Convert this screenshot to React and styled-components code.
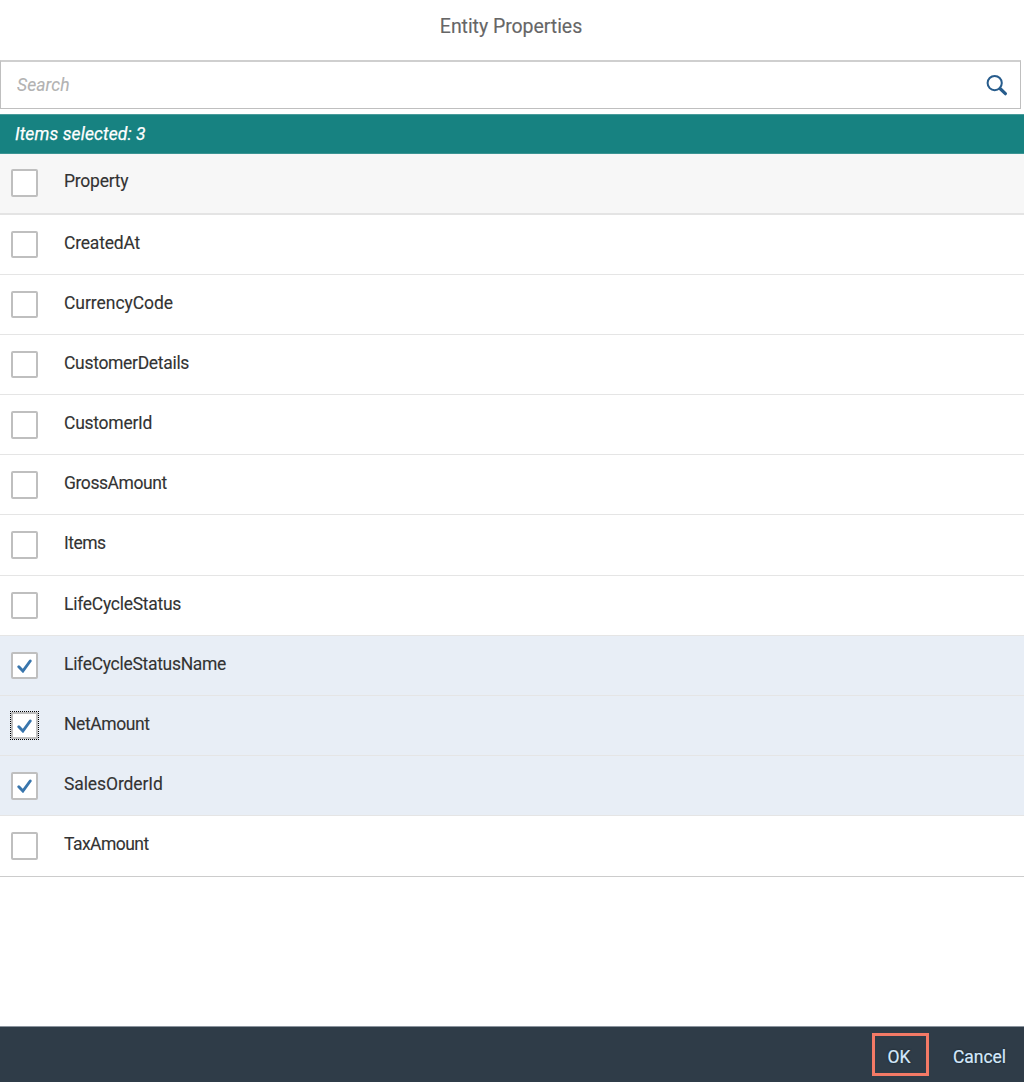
import React from "react";
import styled, { createGlobalStyle } from "styled-components";

const GlobalStyle = createGlobalStyle`
  *, *::before, *::after { box-sizing: border-box; }
  body { margin: 0; background: #fff; }
`;

const Dialog = styled.div`
  display: flex;
  flex-direction: column;
  width: 100%;
  height: 1082px;
  overflow: hidden;
  background: #fff;
  color: #333;
  font-family: Roboto, "Liberation Sans", sans-serif;
  font-size: 17.5px;
  -webkit-text-stroke: 0.12px currentColor;
`;

const Header = styled.header`
  display: flex;
  justify-content: center;
  flex: none;
  height: 60px;
  padding: 15px 2px 0 0;
`;

const Title = styled.h1`
  margin: 0;
  color: #666;
  font-size: 19.5px;
  font-weight: 400;
  line-height: 24px;
  letter-spacing: ${(p) => p.$tracking}px;
`;

const SearchField = styled.div`
  display: flex;
  align-items: center;
  justify-content: space-between;
  flex: none;
  height: 49px;
  margin-right: 3px;
  padding: 0 12px 0 15px;
  border: 1px solid #bfbfbf;
  border-top: 2px solid #cfcfcf;
`;

const SearchInput = styled.input`
  flex: 1;
  padding: 0 0 1px 1px;
  border: 0;
  outline: 0;
  background: transparent;
  font: italic 17.5px Roboto, "Liberation Sans", sans-serif;
  letter-spacing: 0.1px;

  &::placeholder {
    color: #b2b2b2;
    opacity: 1;
  }
`;

const SelectionBar = styled.div`
  flex: none;
  height: 40px;
  margin-top: 5px;
  padding-left: 15px;
  border-top: 1px solid #4a9c9b;
  border-bottom: 1px solid #3b9493;
  background: #178281;
  color: #fff;
  font-style: italic;
  line-height: 39px;
  letter-spacing: ${(p) => p.$tracking}px;
  -webkit-text-stroke: 0.25px currentColor;
`;

const List = styled.div`
  flex: 1;
`;

const Row = styled.label`
  display: flex;
  align-items: flex-start;
  height: 60.18px;
  padding: 16px 0 0 11px;
  border-bottom: 1px solid #e5e5e5;
  background: ${(p) => (p.$selected ? "#e8eef6" : "#fff")};

  &:last-child {
    border-bottom-color: #ccc;
    height: 60.4px;
  }
`;

const HeaderRow = styled(Row)`
  height: 60.6px;
  padding-top: 15px;
  border-bottom: 2px solid #e4e4e4;
  background: #f7f7f7;
`;

const Box = styled.span`
  display: flex;
  align-items: center;
  justify-content: center;
  flex: none;
  width: 27px;
  height: 27.5px;
  border: 2px solid #bfbfbf;
  border-radius: ${(p) => (p.$focused ? 0 : 2)}px;
  outline: ${(p) => (p.$focused ? "1px dotted #000" : "none")};
  background: #fff;
`;

const Label = styled.span`
  margin-left: 26px;
  line-height: 24px;
  letter-spacing: ${(p) => p.$tracking}px;
`;

const Footer = styled.footer`
  display: flex;
  align-items: flex-start;
  justify-content: flex-end;
  flex: none;
  height: 56px;
  padding: 6px 18px 0 0;
  border-top: 1px solid #8b949e;
  background: #2f3c48;
`;

const Button = styled.button`
  height: 43px;
  padding: 4px 0 0;
  border: 0;
  background: transparent;
  color: #d5e9fb;
  font: 400 17.5px Roboto, "Liberation Sans", sans-serif;
  -webkit-text-stroke: 0.2px currentColor;
  text-shadow: 0 0 2px #111a22;
  letter-spacing: ${(p) => p.$tracking}px;
`;

const ConfirmButton = styled(Button)`
  width: 57px;
  margin-right: 24px;
  padding-right: 3px;
  border: 3px solid #f47a66;
`;

function SearchIcon() {
  return (
    <svg width="22" height="22" viewBox="0 0 22 22" fill="none" stroke="#275c8c">
      <circle cx="8.7" cy="9.1" r="7.1" strokeWidth="2" />
      <path d="M14 14.5 19.4 19.7" strokeWidth="3.2" strokeLinecap="round" />
    </svg>
  );
}

function CheckIcon() {
  return (
    <svg width="15" height="14" viewBox="0 0 15 14" fill="none" stroke="#3875ac">
      <path d="M1.8 7.8 5.9 12 13.2 2" strokeWidth="2.9" strokeLinecap="round" />
    </svg>
  );
}

const properties = [
  { name: "CreatedAt", tracking: -0.19 },
  { name: "CurrencyCode", tracking: -0.05 },
  { name: "CustomerDetails", tracking: -0.31 },
  { name: "CustomerId", tracking: -0.26 },
  { name: "GrossAmount", tracking: -0.42 },
  { name: "Items", tracking: -0.5 },
  { name: "LifeCycleStatus", tracking: -0.27 },
  { name: "LifeCycleStatusName", tracking: -0.3, selected: true },
  { name: "NetAmount", tracking: -0.4, selected: true, focused: true },
  { name: "SalesOrderId", tracking: -0.1, selected: true },
  { name: "TaxAmount", tracking: -0.53 },
];

export default function App() {
  return (
    <Dialog>
      <GlobalStyle />
      <Header>
        <Title $tracking={-0.05}>Entity Properties</Title>
      </Header>
      <SearchField>
        <SearchInput placeholder="Search" />
        <SearchIcon />
      </SearchField>
      <SelectionBar $tracking={0.1}>Items selected: 3</SelectionBar>
      <List>
        <HeaderRow>
          <Box />
          <Label $tracking={-0.24}>Property</Label>
        </HeaderRow>
        {properties.map((item) => (
          <Row key={item.name} $selected={item.selected}>
            <Box $focused={item.focused}>{item.selected && <CheckIcon />}</Box>
            <Label $tracking={item.tracking}>{item.name}</Label>
          </Row>
        ))}
      </List>
      <Footer>
        <ConfirmButton $tracking={0}>OK</ConfirmButton>
        <Button $tracking={-0.05}>Cancel</Button>
      </Footer>
    </Dialog>
  );
}
